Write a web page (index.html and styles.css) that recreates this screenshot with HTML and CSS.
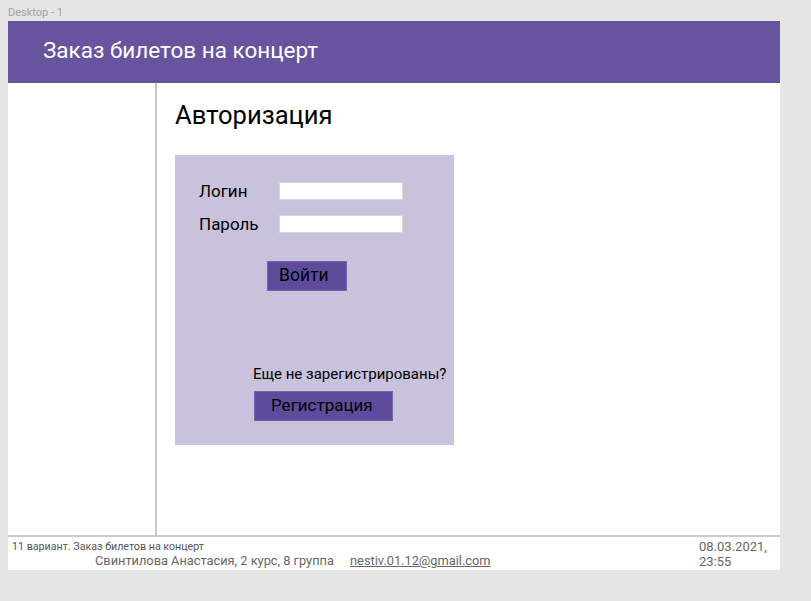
FILE: index.html
```html
<!DOCTYPE html>
<html lang="ru">
<head>
<meta charset="utf-8">
<title>Заказ билетов на концерт</title>
<link rel="stylesheet" href="styles.css">
</head>
<body>
<div class="frame-label">Desktop - 1</div>
<div class="artboard">
  <header class="top">Заказ билетов на концерт</header>
  <div class="main">
    <aside class="side"></aside>
    <section class="content">
      <h1 class="title">Авторизация</h1>
      <div class="auth">
        <div class="row"><span class="lbl">Логин</span><span class="field"></span></div>
        <div class="row row2"><span class="lbl">Пароль</span><span class="field"></span></div>
        <div class="btn btn-login">Войти</div>
        <div class="hint">Еще не зарегистрированы?</div>
        <div class="btn btn-reg">Регистрация</div>
      </div>
    </section>
  </div>
  <footer class="foot">
    <div class="foot-left">
      <div class="variant">11 вариант. Заказ билетов на концерт</div>
      <div class="author">Свинтилова Анастасия, 2 курс, 8 группа <a class="mail">nestiv.01.12@gmail.com</a></div>
    </div>
    <div class="date">08.03.2021,<br>23:55</div>
  </footer>
</div>
</body>
</html>
```
FILE: styles.css
```css
html, body {
  margin: 0;
  padding: 0;
  background: #e5e5e5;
  font-family: Roboto, "Liberation Sans", sans-serif;
}
body {
  padding-left: 8px;
  width: 772px;
}
.frame-label {
  height: 21px;
  box-sizing: border-box;
  padding-top: 6px;
  font-size: 11px;
  line-height: 13px;
  color: #a3a3a3;
}
.artboard {
  width: 772px;
  background: #fff;
}
.top {
  height: 62px;
  background: #67539e;
  color: #fff;
  font-size: 22.5px;
  line-height: 58px;
  padding-left: 35px;
}
.main {
  display: flex;
  height: 452px;
  border-bottom: 2px solid #cbcbcb;
}
.side {
  width: 147px;
  border-right: 2px solid #c9c9c9;
}
.content {
  padding-left: 18px;
  padding-top: 17px;
}
.title {
  margin: 0;
  font-weight: 400;
  font-size: 25.6px;
  line-height: 30px;
  color: #000;
}
.auth {
  margin-top: 25px;
  width: 279px;
  height: 290px;
  box-sizing: border-box;
  background: #c8c2dc;
  padding: 26px 0 0 24px;
  display: flex;
  flex-direction: column;
  align-items: flex-start;
}
.row {
  display: flex;
  align-items: center;
  height: 20px;
  font-size: 17px;
  color: #000;
}
.row2 {
  margin-top: 13px;
}
.lbl {
  width: 80px;
}
.field {
  width: 122px;
  height: 16px;
  background: #fff;
  border: 1px solid #d8d8d8;
}
.btn {
  background: #5f4b9b;
  border: 1px solid #7462aa;
  box-sizing: border-box;
  height: 30px;
  font-size: 17px;
  line-height: 26px;
  color: #000;
}
.btn-login {
  margin-top: 27px;
  margin-left: 68px;
  width: 80px;
  padding-left: 11px;
  font-size: 17.5px;
}
.hint {
  margin-top: 73px;
  margin-left: 54px;
  font-size: 15px;
  line-height: 20px;
  color: #000;
}
.btn-reg {
  margin-top: 7px;
  margin-left: 55px;
  width: 139px;
  padding-left: 16px;
}
.foot {
  height: 33px;
  display: flex;
  justify-content: space-between;
}
.foot-left {
  padding-left: 4px;
  padding-top: 3px;
}
.variant {
  font-size: 10.7px;
  line-height: 13px;
  color: #555;
}
.author {
  padding-left: 83px;
  font-size: 12.8px;
  line-height: 16px;
  color: #666;
}
.mail {
  margin-left: 13px;
  color: #666;
  text-decoration: underline;
}
.date {
  width: 81px;
  padding-top: 2px;
  font-size: 13px;
  line-height: 15px;
  color: #666;
}
```
